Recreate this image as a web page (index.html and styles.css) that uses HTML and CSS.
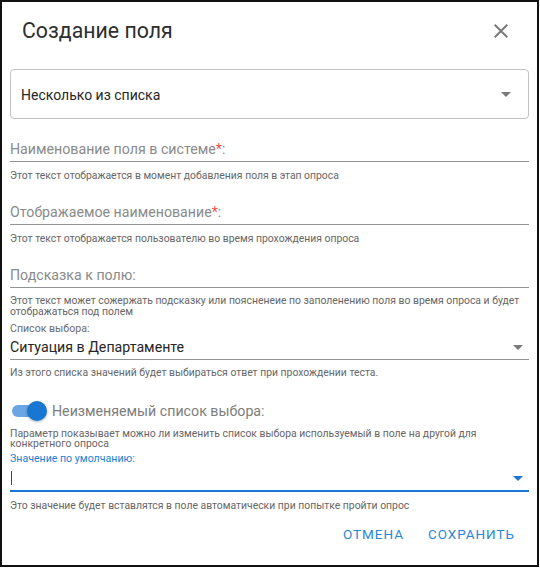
FILE: index.html
```html
<!DOCTYPE html>
<html lang="ru">
<head>
<meta charset="utf-8">
<title>Создание поля</title>
<link rel="stylesheet" href="styles.css">
</head>
<body>
<div class="dialog">
  <header class="head">
    <h1 class="title">Создание поля</h1>
    <button class="close" aria-label="Закрыть">
      <svg viewBox="0 0 24 24" width="24" height="24"><path d="M19,6.41L17.59,5L12,10.59L6.41,5L5,6.41L10.59,12L5,17.59L6.41,19L12,13.41L17.59,19L19,17.59L13.41,12L19,6.41Z"/></svg>
    </button>
  </header>
  <main class="body">
    <div class="outlined">
      <span class="outlined-text">Несколько из списка</span>
      <svg class="arrow" viewBox="0 0 24 24" width="24" height="24"><path d="M7,10L12,15L17,10H7Z"/></svg>
    </div>

    <div class="field">
      <div class="input"><span class="placeholder">Наименование поля в системе<span class="req">*</span>:</span></div>
      <div class="hint">Этот текст отображается в момент добавления поля в этап опроса</div>
    </div>

    <div class="field">
      <div class="input"><span class="placeholder">Отображаемое наименование<span class="req">*</span>:</span></div>
      <div class="hint">Этот текст отображается пользователю во время прохождения опроса</div>
    </div>

    <div class="field field-last">
      <div class="input"><span class="placeholder">Подсказка к полю:</span></div>
      <div class="hint">Этот текст может сожержать подсказку или поясненеие по заполенению поля во время опроса и будет отображаться под полем</div>
    </div>

    <div class="select-field">
      <div class="small-label">Список выбора:</div>
      <div class="select">
        <span class="value">Ситуация в Департаменте</span>
        <svg class="arrow" viewBox="0 0 24 24" width="24" height="24"><path d="M7,10L12,15L17,10H7Z"/></svg>
      </div>
      <div class="hint">Из этого списка значений будет выбираться ответ при прохождении теста.</div>
    </div>

    <div class="switch-row">
      <span class="switch"><span class="track"></span><span class="thumb"></span></span>
      <span class="switch-label">Неизменяемый список выбора:</span>
    </div>
    <div class="hint hint-switch">Параметр показывает можно ли изменить список выбора используемый в поле на другой для конкретного опроса</div>

    <div class="select-field focused">
      <div class="small-label">Значение по умолчанию:</div>
      <div class="select">
        <span class="caret"></span>
        <svg class="arrow" viewBox="0 0 24 24" width="24" height="24"><path d="M7,10L12,15L17,10H7Z"/></svg>
      </div>
      <div class="hint">Это значение будет вставлятся в поле автоматически при попытке пройти опрос</div>
    </div>
  </main>
  <footer class="actions">
    <button class="btn">Отмена</button>
    <button class="btn">Сохранить</button>
  </footer>
</div>
</body>
</html>
```
FILE: styles.css
```css
* { box-sizing: border-box; }
html, body { margin: 0; padding: 0; background: #fff; }
body { font-family: Roboto, "Noto Sans", Arial, sans-serif; color: #212121; }

.dialog {
  width: 539px;
  height: 567px;
  border: 2px solid #111;
  background: #fff;
  display: flex;
  flex-direction: column;
}

.head {
  height: 58px;
  display: flex;
  align-items: center;
  justify-content: space-between;
  padding: 0 24px 0 20px;
}
.title {
  margin: 0;
  font-size: 21.3px;
  font-weight: 400;
  color: #2e2e2e;
  line-height: 1;
}
.close {
  border: 0;
  background: none;
  padding: 0;
  width: 24px;
  height: 24px;
  display: flex;
}
.close svg { fill: #7a7a7a; }

.body {
  padding: 9px 8px 0 8px;
  display: flex;
  flex-direction: column;
}

.outlined {
  height: 50px;
  border: 1px solid #c2c2c2;
  border-radius: 4px;
  display: flex;
  align-items: center;
  justify-content: space-between;
  padding: 2px 10px 0 10px;
}
.outlined-text { font-size: 14px; color: #262626; }
.arrow { fill: #7a7a7a; flex: none; }
.outlined .arrow { margin-top: -2px; }

.field { margin-top: 20px; }
.input {
  height: 23px;
  border-bottom: 1px solid #949494;
  font-size: 14.2px;
  line-height: 21px;
}
.placeholder { color: #8a8a8a; }
.req { color: #ff4d4d; }

.hint {
  font-size: 10.4px;
  line-height: 11px;
  color: #666;
  margin-top: 8px;
}
.field .hint { line-height: 13px; margin-top: 7px; }
.field-last .hint { line-height: 10.5px; margin-top: 8px; }

.select-field { margin-top: 5px; }
.small-label { font-size: 10.6px; line-height: 13px; color: #6b6b6b; }
.select {
  height: 25px;
  border-bottom: 1px solid #949494;
  display: flex;
  align-items: center;
  justify-content: space-between;
}
.select .arrow { margin-right: -1px; }
.value { font-size: 14.2px; color: #262626; }
.select-field .hint { line-height: 13px; margin-top: 6px; }

.switch-row {
  margin-top: 20px;
  height: 24px;
  display: flex;
  align-items: center;
}
.switch {
  position: relative;
  width: 36px;
  height: 24px;
  flex: none;
}
.track {
  position: absolute;
  left: 2px;
  top: 6px;
  width: 30px;
  height: 12px;
  border-radius: 6px;
  background: #6aa6e2;
}
.thumb {
  position: absolute;
  left: 17px;
  top: 2px;
  width: 20px;
  height: 20px;
  border-radius: 50%;
  background: #1976d2;
  box-shadow: 0 1px 3px rgba(0,0,0,.3);
}
.switch-label { margin-left: 6px; font-size: 14.2px; color: #7d7d7d; }

.hint-switch { margin-top: 6px; line-height: 10px; }

.focused { margin-top: 3px; }
.focused .small-label { color: #2080d8; }
.focused .select { height: 27px; border-bottom: 2px solid #1976d2; }
.focused .arrow { fill: #1976d2; }
.caret {
  width: 1px;
  height: 14px;
  background: #1a4d8a;
  margin-left: 1px;
}
.focused .hint { margin-top: 7px; }

.actions {
  margin-top: auto;
  margin-bottom: 13px;
  display: flex;
  justify-content: flex-end;
  gap: 8px;
  padding-right: 14px;
}
.btn {
  border: 0;
  background: none;
  height: 36px;
  padding: 0 8px;
  font-family: Roboto, Arial, sans-serif;
  font-size: 13.5px;
  font-weight: 400;
  letter-spacing: 0.95px;
  text-transform: uppercase;
  color: #2a86d6;
}
```
